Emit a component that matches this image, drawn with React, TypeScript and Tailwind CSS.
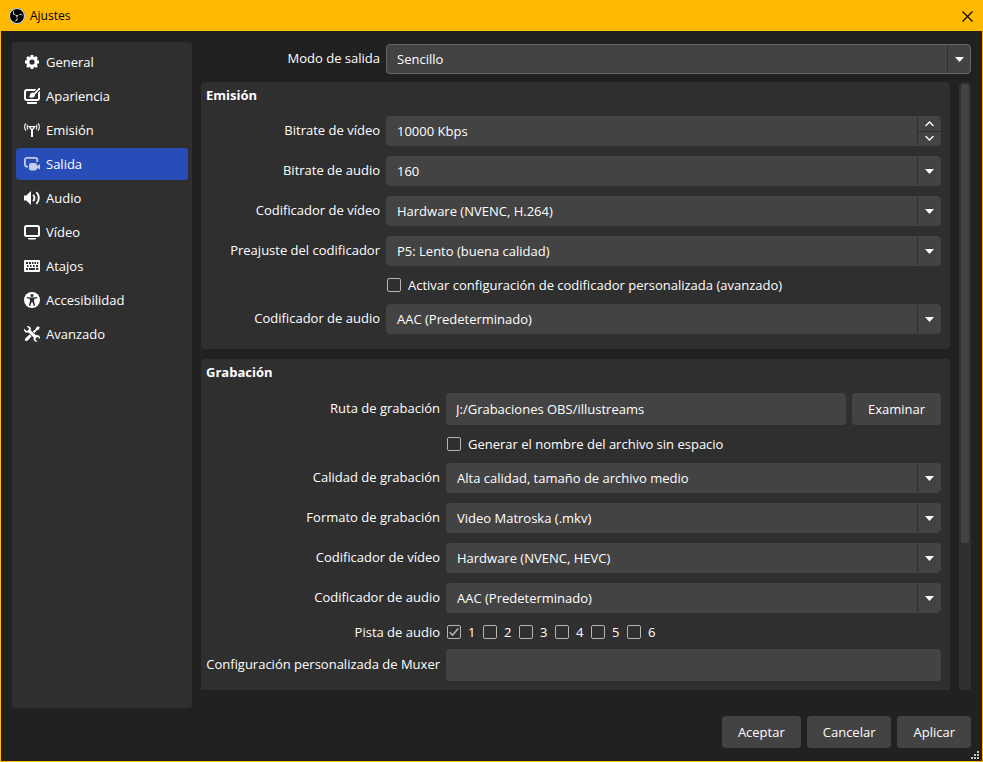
import { useId, useState, type ReactNode } from "react";
import clsx from "clsx";
import { SiObsstudio } from "react-icons/si";

const iconProps = {
  width: 16,
  height: 16,
  viewBox: "0 0 16 16",
  fill: "currentColor",
  "aria-hidden": true,
};

function GearIcon() {
  return (
    <svg {...iconProps}>
      <circle
        cx="8"
        cy="8"
        r="4.2"
        fill="none"
        stroke="currentColor"
        strokeWidth="3.2"
      />
      {[0, 45, 90, 135].map((angle) => (
        <path
          key={angle}
          d="M6.6 3.5V1h2.800v2.500zM6.600 12.500V15h2.800v-2.500z"
          transform={`rotate(${angle} 8 8)`}
        />
      ))}
    </svg>
  );
}

function AppearanceIcon() {
  return (
    <svg {...iconProps}>
      <path
        d="M3 2h10a2 2 0 0 1 2 2v6a2 2 0 0 1-2 2H3a2 2 0 0 1-2-2V4a2 2 0 0 1 2-2z"
        fill="none"
        stroke="currentColor"
        strokeWidth="2"
      />
      <path d="M16-.8v3.600l-4.600 5L9 5.500l3.600-5z" fill="#2f2f2f" />
      <path d="M15 0h1v1.300L11.400 6.300 10 5z" />
      <path d="M9 4.500c1.400 0 2.300 1.100 2.100 2.500-.2 1.700-1.700 2.700-3.400 2.700-1 0-2.100-.3-2.800-.9.800-.1.900-.8 1-1.700C6.100 5.500 7.300 4.500 9 4.500z" />
      <path d="M3 14h10v1a1 1 0 0 1-1 1H4a1 1 0 0 1-1-1z" />
    </svg>
  );
}

function StreamIcon() {
  return (
    <svg {...iconProps}>
      <path d="M4.200 4h7.600L9 8.200V15H7V8.200z" />
      <path d="M6.600 5.200h2.800L8 7.200z" fill="#2f2f2f" />
      <g fill="none" stroke="currentColor" strokeWidth="1.200">
        <path d="M2 1.500C.2 3.500.2 6.700 2 8.700" />
        <path d="M3.800 2.900c-.9 1.300-.9 3.100 0 4.400" />
        <path d="M14 1.500c1.800 2 1.800 5.200 0 7.200" />
        <path d="M12.200 2.900c.9 1.300.9 3.100 0 4.400" />
      </g>
    </svg>
  );
}

function OutputIcon() {
  return (
    <svg {...iconProps}>
      <path
        d="M4 10.600H2.900a2 2 0 0 1-2-2V3.900a2 2 0 0 1 2-2h8.400a2 2 0 0 1 2 2V6"
        fill="none"
        stroke="currentColor"
        strokeWidth="1.800"
      />
      <rect x="5" y="7" width="8" height="7.500" rx="2" />
      <path d="m12 10.700 4-2.600v5.400l-4-2z" />
    </svg>
  );
}

function AudioIcon() {
  return (
    <svg {...iconProps}>
      <path d="M0 5.500h2.300L7 1v14l-4.700-4.500H0z" />
      <g fill="none" stroke="currentColor" strokeWidth="1.900">
        <path d="M9.200 4.700c1.500 2 1.500 4.600 0 6.600" />
        <path d="M12.400 2.200c3.200 3.400 3.200 8.200 0 11.600" />
      </g>
    </svg>
  );
}

function VideoIcon() {
  return (
    <svg {...iconProps}>
      <rect
        x="1"
        y="2"
        width="14"
        height="10"
        rx="1.500"
        fill="none"
        stroke="currentColor"
        strokeWidth="2"
      />
      <path d="M4 14h8v.5a1 1 0 0 1-1 1H5a1 1 0 0 1-1-1z" />
    </svg>
  );
}

function KeyboardIcon() {
  return (
    <svg {...iconProps}>
      <rect y="2" width="16" height="12" rx="1" />
      <path
        fill="#2f2f2f"
        d="M2 4h2v2H2zM5 4h2v2H5zM8 4h1.500v2H8zM10.500 4H12v2h-1.500zM13 4h1.300v2H13zM3 7h1.500v2H3zM6 7h1.500v2H6zM9 7h1.500v2H9zM12 7h2v2h-2zM2 10h2v2H2zM5 10h6v2H5zM12 10h2.300v2H12z"
      />
    </svg>
  );
}

function AccessibilityIcon() {
  return (
    <svg {...iconProps}>
      <circle cx="8" cy="8" r="8" />
      <circle cx="8" cy="3.500" r="1.600" fill="#2f2f2f" />
      <path
        fill="#2f2f2f"
        d="M2.900 4.900l3.500.7h3.200l3.500-.7v1.300l-3 .9v2.400l1.100 4.200H9.600L8.500 10.200h-1l-1.100 3.500H4.800l1.100-4.200V7.100l-3-.9z"
      />
    </svg>
  );
}

function ToolsIcon() {
  return (
    <svg {...iconProps}>
      <path d="M14.400.200 15.800 1.600 14.600 3.800l-1.700.5L4 14.300c-.8.900-1.900 1.100-2.700.4-.7-.8-.5-1.900.4-2.700L11.700 3.100l.5-1.700z" />
      <path
        stroke="#2f2f2f"
        strokeWidth=".8"
        d="M1.900-.1 4.500 2.500 4.100 4.100 2.500 4.500-.1 1.900C-.7 4 .1 5.900 1.600 6.700c1 .5 2 .5 3 .2l4.600 4.600c-.3 1 0 2.500.8 3.400 1.100 1.200 2.700 1.600 4.300 1.100l-2.500-2.400.5-1.700 1.700-.5 2.400 2.500c.5-1.600.1-3.200-1.100-4.300-.9-.8-2.400-1.100-3.400-.8L7.100 4.400c.3-1 .2-2.200-.4-3.100C5.800 0 3.800-.7 1.900-.1z"
      />
    </svg>
  );
}

const sections = [
  { name: "General", icon: GearIcon },
  { name: "Apariencia", icon: AppearanceIcon },
  { name: "Emisión", icon: StreamIcon },
  { name: "Salida", icon: OutputIcon },
  { name: "Audio", icon: AudioIcon },
  { name: "Vídeo", icon: VideoIcon },
  { name: "Atajos", icon: KeyboardIcon },
  { name: "Accesibilidad", icon: AccessibilityIcon },
  { name: "Avanzado", icon: ToolsIcon },
];

function TitleBar() {
  return (
    <header className="flex h-[30px] shrink-0 items-center bg-[#ffb900] pr-[9px] pl-2 text-black">
      <span className="flex size-4 items-center justify-center rounded-full bg-black text-white outline-1 -outline-offset-1 outline-[#c8c8c8]">
        <SiObsstudio size={16} />
      </span>
      <h1 className="ml-[5px] flex-1 text-xs">Ajustes</h1>
      <button type="button" aria-label="Cerrar">
        <svg width="11" height="11" viewBox="0 0 11 11" aria-hidden>
          <path d="M.5.5l10 10M10.500.5l-10 10" stroke="#000" strokeWidth="1.100" />
        </svg>
      </button>
    </header>
  );
}

type SidebarProps = {
  active: string;
  onSelect: (name: string) => void;
};

function Sidebar({ active, onSelect }: SidebarProps) {
  return (
    <nav className="w-[180px] shrink-0 rounded bg-[#2f2f2f] p-1">
      <ul className="flex flex-col gap-0.5">
        {sections.map(({ name, icon: Icon }) => (
          <li key={name}>
            <button
              type="button"
              onClick={() => onSelect(name)}
              className={clsx(
                "flex h-8 w-full items-center gap-1.5 rounded px-2",
                name === active && "bg-[#284cb8]",
              )}
            >
              <span className={clsx(name === active && "text-[#c3cdec]")}>
                <Icon />
              </span>
              {name}
            </button>
          </li>
        ))}
      </ul>
    </nav>
  );
}

function Label({ htmlFor, children }: { htmlFor?: string; children: ReactNode }) {
  return (
    <label
      htmlFor={htmlFor}
      className="self-center pb-0.5 text-right whitespace-nowrap"
    >
      {children}
    </label>
  );
}

type SelectRowProps = {
  label: string;
  value: string;
  outlined?: boolean;
};

function SelectRow({ label, value, outlined }: SelectRowProps) {
  const id = useId();

  return (
    <>
      <Label htmlFor={id}>{label}</Label>
      <div className="relative">
        <select
          id={id}
          className={clsx(
            "block h-[30px] w-full appearance-none rounded border bg-[#434343] pr-8 pl-2.5",
            outlined ? "border-[#666666]" : "border-[#434343]",
          )}
        >
          <option>{value}</option>
        </select>
        <span className="pointer-events-none absolute inset-y-px right-0 flex w-6 items-center justify-center border-l border-[#2f2f2f]">
          <svg width="9" height="5" viewBox="0 0 9 5" aria-hidden>
            <path d="M0 0h9L4.500 5z" fill="#fff" />
          </svg>
        </span>
      </div>
    </>
  );
}

function SpinRow({ label, value }: { label: string; value: string }) {
  const id = useId();

  return (
    <>
      <Label htmlFor={id}>{label}</Label>
      <div className="flex h-[30px] rounded bg-[#434343] py-px">
        <input
          id={id}
          type="text"
          defaultValue={value}
          className="min-w-0 flex-1 pl-[11px]"
        />
        <div className="flex w-6 flex-col border-l border-[#2f2f2f]">
          <button
            type="button"
            aria-label="Aumentar"
            className="flex flex-1 items-center justify-center border-b border-[#2f2f2f]"
          >
            <svg width="9" height="6" viewBox="0 0 9 6" aria-hidden>
              <path d="M.5 5l4-4 4 4" fill="none" stroke="#fff" strokeWidth="1.300" />
            </svg>
          </button>
          <button
            type="button"
            aria-label="Reducir"
            className="flex flex-1 items-center justify-center"
          >
            <svg width="9" height="6" viewBox="0 0 9 6" aria-hidden>
              <path d="M.5 1l4 4 4-4" fill="none" stroke="#fff" strokeWidth="1.300" />
            </svg>
          </button>
        </div>
      </div>
    </>
  );
}

type CheckboxProps = {
  label: string;
  defaultChecked?: boolean;
};

function Checkbox({ label, defaultChecked }: CheckboxProps) {
  return (
    <label className="flex items-center gap-[7px] pl-px whitespace-nowrap">
      <span className="relative size-3.5">
        <input
          type="checkbox"
          defaultChecked={defaultChecked}
          className="peer block size-3.5 appearance-none rounded-xs border border-[#b4b4b4]"
        />
        <svg
          className="pointer-events-none absolute inset-0 hidden peer-checked:block"
          width="14"
          height="14"
          viewBox="0 0 14 14"
          aria-hidden
        >
          <path
            d="M2.700 7.200l2.800 2.900 5.800-6.600"
            fill="none"
            stroke="#b4b4b4"
            strokeWidth="1.500"
          />
        </svg>
      </span>
      {label}
    </label>
  );
}

function Button({ children }: { children: ReactNode }) {
  return (
    <button type="button" className="h-8 rounded bg-[#434343] px-4">
      {children}
    </button>
  );
}

function StreamingGroup() {
  return (
    <section className="rounded bg-[#2f2f2f] pb-[15px]">
      <h2 className="h-[26px] pl-[5px] leading-[26px] font-bold">Emisión</h2>
      <div className="mt-2 grid grid-cols-[174px_1fr] gap-x-1.5 gap-y-2.5 pr-[9px] pl-[5px]">
        <SpinRow label="Bitrate de vídeo" value="10000 Kbps" />
        <SelectRow label="Bitrate de audio" value="160" />
        <SelectRow label="Codificador de vídeo" value="Hardware (NVENC, H.264)" />
        <SelectRow
          label="Preajuste del codificador"
          value="P5: Lento (buena calidad)"
        />
        <div className="col-start-2">
          <Checkbox label="Activar configuración de codificador personalizada (avanzado)" />
        </div>
        <SelectRow label="Codificador de audio" value="AAC (Predeterminado)" />
      </div>
    </section>
  );
}

function RecordingGroup() {
  return (
    <section className="flex-1 rounded-t bg-[#2f2f2f] pb-[9px]">
      <h2 className="h-[26px] pl-[5px] leading-[26px] font-bold">Grabación</h2>
      <div className="mt-2 grid grid-cols-[234px_1fr] gap-x-1.5 gap-y-2.5 pr-[9px] pl-[5px]">
        <Label htmlFor="path">Ruta de grabación</Label>
        <div className="flex gap-1.5">
          <input
            id="path"
            type="text"
            defaultValue="J:/Grabaciones OBS/illustreams"
            className="h-8 min-w-0 flex-1 rounded bg-[#434343] px-2.5"
          />
          <Button>Examinar</Button>
        </div>
        <div className="col-start-2">
          <Checkbox label="Generar el nombre del archivo sin espacio" />
        </div>
        <SelectRow
          label="Calidad de grabación"
          value="Alta calidad, tamaño de archivo medio"
        />
        <SelectRow label="Formato de grabación" value="Video Matroska (.mkv)" />
        <SelectRow label="Codificador de vídeo" value="Hardware (NVENC, HEVC)" />
        <SelectRow label="Codificador de audio" value="AAC (Predeterminado)" />
        <span id="tracks" className="h-4 pt-0.5 text-right leading-[14px]">
          Pista de audio
        </span>
        <div
          role="group"
          aria-labelledby="tracks"
          className="grid h-4 auto-cols-[36px] grid-flow-col pt-0.5 leading-[14px]"
        >
          {["1", "2", "3", "4", "5", "6"].map((track) => (
            <Checkbox key={track} label={track} defaultChecked={track === "1"} />
          ))}
        </div>
        <Label htmlFor="muxer">Configuración personalizada de Muxer</Label>
        <input
          id="muxer"
          type="text"
          className="h-8 min-w-0 rounded bg-[#434343] px-2.5"
        />
      </div>
    </section>
  );
}

function ResizeGrip() {
  return (
    <svg
      className="absolute right-[3px] bottom-0.5"
      width="8"
      height="8"
      viewBox="0 0 8 8"
      fill="#c4c4c4"
      aria-hidden
    >
      <path d="M6 0h2v2H6zM3 3h2v2H3zM6 3h2v2H6zM0 6h2v2H0zM3 6h2v2H3zM6 6h2v2H6z" />
    </svg>
  );
}

function App() {
  const [active, setActive] = useState("Salida");

  return (
    <div className="relative flex h-screen flex-col border border-[#ffb900] bg-[#212121] font-['Open_Sans',sans-serif] text-[13px] leading-[18px] text-white">
      <TitleBar />

      <div className="flex min-h-0 flex-1 gap-[9px] px-[11px] pt-[11px]">
        <Sidebar active={active} onSelect={setActive} />

        <main className="flex min-w-0 flex-1 flex-col gap-2 pt-0.5 pb-[18px]">
          <div className="grid grid-cols-[179px_1fr] gap-x-1.5">
            <SelectRow label="Modo de salida" value="Sencillo" outlined />
          </div>

          <div className="flex min-h-0 flex-1 gap-[9px]">
            <div className="flex min-w-0 flex-1 flex-col gap-2.5 overflow-hidden">
              <StreamingGroup />
              <RecordingGroup />
            </div>
            <div className="w-3 rounded bg-[#2f2f2f] p-0.5">
              <div className="h-[76%] rounded-xs bg-[#434343]" />
            </div>
          </div>
        </main>
      </div>

      <footer className="flex justify-end gap-1.5 px-[11px] pt-2 pb-[13px]">
        <Button>Aceptar</Button>
        <Button>Cancelar</Button>
        <Button>Aplicar</Button>
      </footer>
      <ResizeGrip />
    </div>
  );
}

export default App;
